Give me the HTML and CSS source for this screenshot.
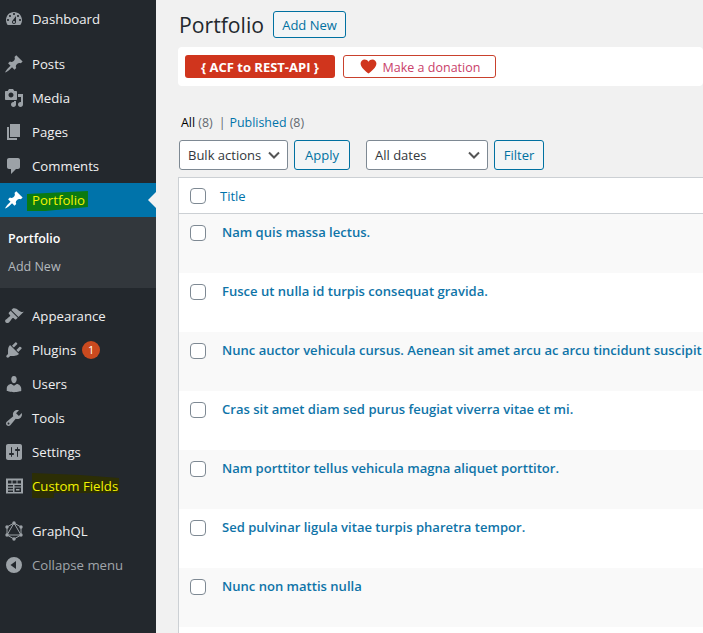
FILE: index.html
```html
<!DOCTYPE html>
<html>
<head>
    <meta charset="UTF-8">
    <meta name="viewport" content="width=device-width, initial-scale=1.0">
    <title>Portfolio</title>
    <link rel="stylesheet" href="styles.css">
</head>
<body>
    <div class="wrap">
        <nav class="sidebar">
            <a class="menu-item first"><svg class="icon" viewBox="0 0 20 20"><path d="M3.76 16h12.48c1.1-1.37 1.76-3.11 1.76-5 0-4.42-3.58-8-8-8s-8 3.58-8 8c0 1.89.66 3.63 1.76 5zM10 4c.55 0 1 .45 1 1s-.45 1-1 1-1-.45-1-1 .45-1 1-1zM6 6c.55 0 1 .45 1 1s-.45 1-1 1-1-.45-1-1 .45-1 1-1zm8 0c.55 0 1 .45 1 1s-.45 1-1 1-1-.45-1-1 .45-1 1-1zm-5.37 5.55L12 7v6c0 1.1-.9 2-2 2s-2-.9-2-2c0-.57.24-1.08.63-1.45zM4 10c.55 0 1 .45 1 1s-.45 1-1 1-1-.45-1-1 .45-1 1-1zm12 0c.55 0 1 .45 1 1s-.45 1-1 1-1-.45-1-1 .45-1 1-1zm-5 3c0-.55-.45-1-1-1s-1 .45-1 1 .45 1 1 1 1-.45 1-1z"/></svg>Dashboard</a>
            <div class="sep"></div>
            <a class="menu-item"><svg class="icon" viewBox="0 0 20 20"><path d="M10.44 3.02l1.82-1.82 6.36 6.35-1.83 1.82c-1.05-.68-2.48-.57-3.41.36l-.75.75c-.92.93-1.04 2.35-.35 3.41l-1.83 1.82-2.41-2.41-2.8 2.79c-.42.42-3.38 2.71-3.8 2.29s1.86-3.39 2.28-3.81l2.79-2.79L4.1 9.36l1.83-1.82c1.05.69 2.48.57 3.4-.36l.75-.75c.93-.92 1.05-2.35.36-3.41z"/></svg>Posts</a>
            <a class="menu-item"><svg class="icon" viewBox="0 0 20 20"><path d="M13 11V4c0-.55-.45-1-1-1h-1.67L9 1H5L3.67 3H2c-.55 0-1 .45-1 1v7c0 .55.45 1 1 1h10c.55 0 1-.45 1-1zM7 4.5c1.38 0 2.5 1.12 2.5 2.5S8.38 9.5 7 9.5 4.5 8.38 4.5 7 5.62 4.5 7 4.5zM14 6h5v10.5c0 1.38-1.12 2.5-2.5 2.5S14 17.88 14 16.5s1.12-2.5 2.5-2.5c.17 0 .34.02.5.05V9h-3V6zm-4 8.05V13h2v3.5c0 1.38-1.12 2.5-2.5 2.5S7 17.88 7 16.5 8.12 14 9.5 14c.17 0 .34.02.5.05z"/></svg>Media</a>
            <a class="menu-item"><svg class="icon" viewBox="0 0 20 20"><path d="M6 15V2h10v13H6zm-1 1h8v2H3V5h2v11z"/></svg>Pages</a>
            <a class="menu-item"><svg class="icon" viewBox="0 0 20 20"><path d="M5 2h9c1.1 0 2 .9 2 2v7c0 1.1-.9 2-2 2h-2l-5 5v-5H5c-1.1 0-2-.9-2-2V4c0-1.1.9-2 2-2z"/></svg>Comments</a>
            <a class="menu-item current"><svg class="icon" viewBox="0 0 20 20"><path d="M10.44 3.02l1.82-1.82 6.36 6.35-1.83 1.82c-1.05-.68-2.48-.57-3.41.36l-.75.75c-.92.93-1.04 2.35-.35 3.41l-1.83 1.82-2.41-2.41-2.8 2.79c-.42.42-3.38 2.71-3.8 2.29s1.86-3.39 2.28-3.81l2.79-2.79L4.1 9.36l1.83-1.82c1.05.69 2.48.57 3.4-.36l.75-.75c.93-.92 1.05-2.35.36-3.41z"/></svg><span class="mark mark-green">Portfolio</span></a>
            <div class="submenu">
                <a class="sub-item active">Portfolio</a>
                <a class="sub-item">Add New</a>
            </div>
            <div class="sep"></div>
            <a class="menu-item"><svg class="icon" viewBox="0 0 20 20"><path d="M14.48 11.06L7.41 3.99l1.5-1.5c.5-.56 2.3-.47 3.51.32 1.21.8 1.43 1.28 2.91 2.1 1.18.64 2.45 1.26 4.45.85zm-.71.71L6.7 4.7 4.93 6.47c-.39.39-.39 1.02 0 1.41l1.06 1.06c.39.39.39 1.03 0 1.42-.6.6-1.43 1.11-2.21 1.69-.35.26-.7.53-1.01.84C1.43 13.23.91 14.45 1.2 15.5c.09.33.28.65.55.92.27.27.59.46.92.55 1.05.29 2.27-.23 3.13-1.57.31-.31.58-.66.84-1.01.58-.78 1.09-1.61 1.69-2.21.39-.39 1.03-.39 1.42 0l1.06 1.06c.39.39 1.02.39 1.41 0z"/></svg>Appearance</a>
            <a class="menu-item"><svg class="icon" viewBox="0 0 20 20"><path d="M13.11 4.36L9.87 7.6 8 5.73l3.24-3.24c.35-.34 1.05-.2 1.56.32.52.51.66 1.21.31 1.55zm-8 1.77l.91-1.12 9.01 9.01-1.19.84c-.71.71-2.63 1.16-3.82 1.16H6.14L4.9 17.26c-.59.59-1.54.59-2.12 0-.59-.58-.59-1.53 0-2.12l1.24-1.24v-3.88c0-1.13.4-3.19 1.09-3.89zm7.26 3.97l3.24-3.24c.34-.35 1.04-.21 1.55.31.52.51.66 1.21.31 1.55l-3.24 3.25z"/></svg>Plugins<span class="badge">1</span></a>
            <a class="menu-item"><svg class="icon" viewBox="0 0 20 20"><path d="M10 9.25c-2.27 0-2.73-3.44-2.73-3.44C7 4.02 7.82 2 9.97 2c2.16 0 2.98 2.02 2.71 3.81 0 0-.41 3.44-2.68 3.44zm0 2.57L12.72 10c2.39 0 4.52 2.33 4.52 4.53v2.49s-3.65 1.13-7.24 1.13c-3.65 0-7.24-1.13-7.24-1.13v-2.49c0-2.25 1.94-4.48 4.47-4.48z"/></svg>Users</a>
            <a class="menu-item"><svg class="icon" viewBox="0 0 20 20"><path d="M16.68 9.77c-1.34 1.34-3.3 1.67-4.95.99l-5.41 6.52c-.99.99-2.59.99-3.58 0s-.99-2.59 0-3.57l6.52-5.42c-.68-1.65-.35-3.61.99-4.95 1.28-1.28 3.12-1.62 4.72-1.06l-2.89 2.89 2.82 2.82 2.86-2.87c.53 1.58.18 3.39-1.08 4.65zM3.81 16.21c.4.39 1.04.39 1.43 0 .4-.4.4-1.04 0-1.43-.39-.4-1.03-.4-1.43 0-.39.39-.39 1.03 0 1.43z"/></svg>Tools</a>
            <a class="menu-item"><svg class="icon" viewBox="0 0 20 20"><path d="M18 16V4c0-1.1-.9-2-2-2H4c-1.1 0-2 .9-2 2v12c0 1.1.9 2 2 2h12c1.1 0 2-.9 2-2zM8 11h1c.55 0 1 .45 1 1s-.45 1-1 1H8v1.5c0 .28-.22.5-.5.5s-.5-.22-.5-.5V13H6c-.55 0-1-.45-1-1s.45-1 1-1h1V5.5c0-.28.22-.5.5-.5s.5.22.5.5V11zm5-2h-1c-.55 0-1-.45-1-1s.45-1 1-1h1V5.5c0-.28.22-.5.5-.5s.5.22.5.5V7h1c.55 0 1 .45 1 1s-.45 1-1 1h-1v5.5c0 .28-.22.5-.5.5s-.5-.22-.5-.5V9z"/></svg>Settings</a>
            <a class="menu-item"><svg class="icon" viewBox="0 0 20 20"><path fill-rule="evenodd" d="M2 2.500h17v15H2zM4 4.500v3h3.500v-3zM8.500 4.500v3h4v-3zM13.500 4.500v3H17v-3zM4 9v1.500h5V9zM4 11.800v1.400h5v-1.400zM4 14.500V16h5v-1.500zM10.500 9v1.500H17V9zM10.500 11.500V16H17v-4.500zM12 13h3.500v1.500H12z"/></svg><span class="mark mark-dark">Custom Fields</span></a>
            <div class="sep"></div>
            <a class="menu-item"><svg class="icon" viewBox="0 0 20 20"><g fill="none" stroke="#9ca2a7" stroke-width="1"><path d="M10 2l7 4v8l-7 4-7-4V6z"/><path d="M10 2l7 12H3z"/></g><circle cx="10" cy="2" r="1.700"/><circle cx="17" cy="6" r="1.700"/><circle cx="17" cy="14" r="1.700"/><circle cx="10" cy="18" r="1.700"/><circle cx="3" cy="14" r="1.700"/><circle cx="3" cy="6" r="1.700"/></svg>GraphQL</a>
            <a class="menu-item collapse"><svg class="icon" viewBox="0 0 20 20"><path fill-rule="evenodd" d="M10 2a8 8 0 1 0 0 16 8 8 0 0 0 0-16zM12 6v8L6.500 10z"/></svg>Collapse menu</a>
        </nav>

        <main class="content">
            <div class="heading">
                <h1>Portfolio</h1>
                <a class="btn add-new">Add New</a>
            </div>
            <div class="notice">
                <a class="acf-btn">{ ACF to REST-API }</a>
                <a class="donate-btn"><svg class="heart" viewBox="0 0 20 18"><path d="M10 17.500C7 15 .5 10.500.5 5.500.5 2.500 2.800.5 5.300.5 7.300.5 9 1.500 10 3.300 11 1.500 12.700.5 14.700.5c2.500 0 4.800 2 4.800 5 0 5-6.500 9.500-9.500 12z"/></svg><span class="donate-text">Make a donation</span></a>
            </div>
            <ul class="subsubsub">
                <li><b>All</b> <span class="count">(8)</span></li>
                <li class="divider">|</li>
                <li><a>Published</a> <span class="count">(8)</span></li>
            </ul>
            <div class="tablenav">
                <div class="select bulk">Bulk actions<svg class="chevron" viewBox="0 0 12 8"><path d="M1 1.500l5 5 5-5"/></svg></div>
                <a class="btn apply">Apply</a>
                <div class="select dates">All dates<svg class="chevron" viewBox="0 0 12 8"><path d="M1 1.500l5 5 5-5"/></svg></div>
                <a class="btn filter">Filter</a>
            </div>
            <div class="posts">
                <div class="row head"><input type="checkbox"><a class="col-title">Title</a></div>
                <div class="row"><input type="checkbox"><a class="post-title">Nam quis massa lectus.</a></div>
                <div class="row"><input type="checkbox"><a class="post-title">Fusce ut nulla id turpis consequat gravida.</a></div>
                <div class="row"><input type="checkbox"><a class="post-title">Nunc auctor vehicula cursus. Aenean sit amet arcu ac arcu tincidunt suscipit</a></div>
                <div class="row"><input type="checkbox"><a class="post-title">Cras sit amet diam sed purus feugiat viverra vitae et mi.</a></div>
                <div class="row"><input type="checkbox"><a class="post-title">Nam porttitor tellus vehicula magna aliquet porttitor.</a></div>
                <div class="row"><input type="checkbox"><a class="post-title">Sed pulvinar ligula vitae turpis pharetra tempor.</a></div>
                <div class="row"><input type="checkbox"><a class="post-title">Nunc non mattis nulla</a></div>
                <div class="row"></div>
            </div>
        </main>
    </div>
</body>
</html>
```

FILE: styles.css
```css
html, body {
    margin: 0;
    height: 100%;
    overflow: hidden;
}
body {
    font-family: "Open Sans", "Noto Sans", Arial, sans-serif;
    font-size: 13px;
    color: #3c434a;
    background-color: #f1f1f1;
}
.wrap {
    display: flex;
    height: 633px;
    overflow: hidden;
}

/* sidebar */
.sidebar {
    width: 156px;
    flex: none;
    background-color: #23282d;
    padding-top: 2px;
    box-sizing: border-box;
}
.menu-item {
    position: relative;
    display: flex;
    align-items: center;
    height: 34px;
    color: #f0f0f1;
    font-size: 13.2px;
    white-space: nowrap;
}
.icon {
    width: 20px;
    height: 20px;
    flex: none;
    margin: 0 8px 0 4px;
    fill: #9ca2a7;
}
.sep {
    height: 11px;
}
.current {
    background-color: #0073aa;
    color: #fff;
}
.current .icon {
    fill: #fff;
}
.current::after {
    content: "";
    position: absolute;
    right: 0;
    top: 9px;
    border: 8px solid transparent;
    border-left-width: 0;
    border-right-color: #f1f1f1;
}
/* marker scribbles drawn over the screenshot */
.mark {
    position: relative;
    z-index: 0;
    line-height: 18px;
    color: #f4f400;
}
.mark::before {
    content: "";
    position: absolute;
    z-index: -1;
}
.mark-green::before {
    left: -5px;
    right: -3px;
    top: 0;
    bottom: -2px;
    background-color: #0b7a12;
    clip-path: polygon(0 15%, 100% 0, 100% 80%, 30% 100%, 0 100%);
}
.mark-dark::before {
    left: 0;
    right: -1px;
    top: -4px;
    bottom: -3px;
    background-color: #2c2e05;
    clip-path: polygon(0 0, 55% 8%, 100% 20%, 100% 80%, 25% 80%, 25% 100%, 0 100%);
}
.submenu {
    background-color: #32373c;
    padding: 7px 0 8px;
}
.sub-item {
    display: flex;
    align-items: center;
    height: 28px;
    padding-left: 8px;
    color: #b4b9be;
    font-size: 12.5px;
}
.sub-item.active {
    color: #fff;
    font-weight: 600;
}
.badge {
    display: inline-block;
    width: 18px;
    height: 18px;
    line-height: 18px;
    margin-left: 6px;
    border-radius: 50%;
    background-color: #ca4a1f;
    color: #fff;
    font-size: 11px;
    text-align: center;
}
.collapse {
    color: #a0a5aa;
}

/* main area */
.content {
    flex: 1;
    min-width: 0;
    padding-left: 22px;
}
.heading {
    display: flex;
    align-items: center;
    height: 38px;
    padding-top: 11px;
    box-sizing: border-box;
}
.heading h1 {
    margin: 0 9px 0 1px;
    font-size: 21.2px;
    font-weight: 400;
    color: #23282d;
}
.btn {
    display: flex;
    align-items: center;
    justify-content: center;
    box-sizing: border-box;
    border: 1px solid #0071a1;
    border-radius: 3px;
    background-color: #f3f5f6;
    color: #0071a1;
}
.add-new {
    width: 73px;
    height: 27px;
}
.notice {
    display: flex;
    gap: 8px;
    height: 39px;
    margin-top: 9px;
    padding: 8px 0 0 7px;
    box-sizing: border-box;
    background-color: #fff;
    border-radius: 4px;
}
.acf-btn {
    display: flex;
    align-items: center;
    justify-content: center;
    width: 150px;
    height: 23px;
    border-radius: 3px;
    background-color: #d0351d;
    color: #fff;
    font-weight: 700;
}
.donate-btn {
    display: flex;
    align-items: center;
    justify-content: center;
    width: 153px;
    height: 23px;
    padding-left: 1px;
    box-sizing: border-box;
    border: 1px solid #c9412d;
    border-radius: 3px;
    background-color: #fff;
    color: #c9416a;
    font-size: 12.5px;
}
.donate-text {
    padding-top: 2px;
}
.heart {
    width: 17px;
    height: 15px;
    margin-right: 6px;
    fill: #d0351d;
}
.subsubsub {
    display: flex;
    gap: 6px;
    margin: 28px 0 0 3px;
    padding: 0;
    height: 18px;
    line-height: 18px;
    list-style: none;
    color: #646970;
    font-size: 12.4px;
}
.subsubsub b {
    color: #000;
    font-weight: 400;
}
.subsubsub a {
    color: #0073aa;
}
.divider {
    margin-right: -2px;
}
.tablenav {
    display: flex;
    height: 30px;
    margin-top: 8px;
    padding-left: 1px;
}
.select {
    display: flex;
    align-items: center;
    justify-content: space-between;
    box-sizing: border-box;
    height: 30px;
    padding: 0 7px 0 8px;
    border: 1px solid #7e8993;
    border-radius: 3px;
    background-color: #fff;
    color: #32373c;
}
.bulk {
    width: 109px;
}
.dates {
    width: 122px;
    margin-left: 16px;
}
.chevron {
    width: 12px;
    height: 8px;
    fill: none;
    stroke: #555;
    stroke-width: 2;
}
.apply {
    width: 56px;
    height: 30px;
    margin-left: 6px;
}
.filter {
    width: 50px;
    height: 30px;
    margin-left: 6px;
}
.posts {
    margin-top: 7px;
    border-top: 1px solid #ccd0d4;
    border-left: 1px solid #ccd0d4;
    background-color: #fff;
    width: 600px;
}
.row {
    display: flex;
    align-items: flex-start;
    height: 59px;
    padding: 11px 0 0 11px;
    box-sizing: border-box;
    background-color: #fff;
    overflow: hidden;
}
.row:nth-child(even) {
    background-color: #f9f9f9;
}
.row input {
    appearance: none;
    flex: none;
    width: 16px;
    height: 16px;
    margin: 0;
    border: 1px solid #7e8993;
    border-radius: 4px;
    background-color: #fff;
}
.head {
    height: 36px;
    padding-top: 10px;
    border-bottom: 1px solid #ccd0d4;
}
.col-title {
    margin-left: 14px;
    color: #0073aa;
    line-height: 16px;
}
.post-title {
    margin-left: 16px;
    color: #0f74a8;
    font-weight: 600;
    font-size: 13.05px;
    line-height: 14px;
    white-space: nowrap;
}
```
